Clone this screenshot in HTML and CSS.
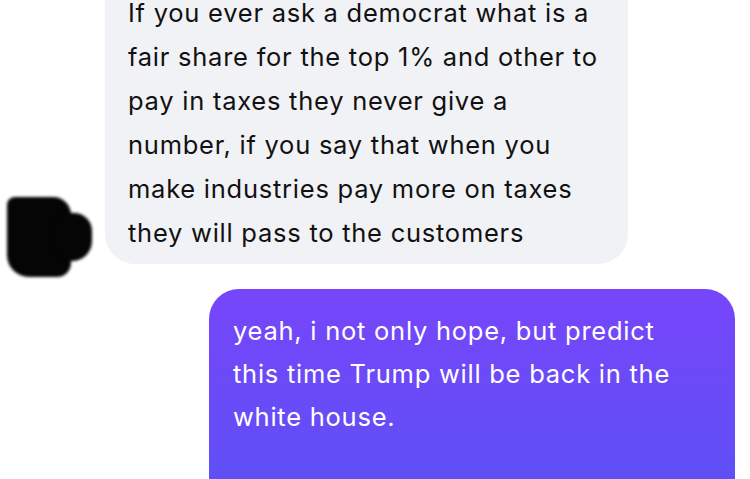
FILE: index.html
```html
<!DOCTYPE html>
<html>
<head>
<meta charset="utf-8">
<link rel="stylesheet" href="styles.css">
</head>
<body>
<div class="chat">
  <div class="row incoming">
    <div class="avatar"><div class="blob-a"></div><div class="blob-b"></div></div>
    <div class="bubble grey">If you ever ask a democrat what is a<br>fair share for the top 1% and other to<br>pay in taxes they never give a<br>number, if you say that when you<br>make industries pay more on taxes<br>they will pass to the customers</div>
  </div>
  <div class="row outgoing">
    <div class="bubble purple">yeah, i not only hope, but predict<br>this time Trump will be back in the<br>white house.</div>
  </div>
</div>
</body>
</html>
```

FILE: styles.css
```css
html, body {
  margin: 0;
  padding: 0;
  background: #ffffff;
  overflow: hidden;
}
body {
  width: 750px;
  height: 479px;
  font-family: Inter, "Noto Sans", sans-serif;
  font-size: 25.5px;
  letter-spacing: 0.75px;
}
.chat {
  display: flex;
  flex-direction: column;
  gap: 25px;
  margin-top: -40px;
}
.row {
  display: flex;
  align-items: flex-end;
}
.incoming {
  padding-left: 5px;
}
.avatar {
  position: relative;
  width: 87px;
  height: 80px;
  margin-bottom: -13px;
  margin-right: 13px;
  flex: none;
}
.blob-a {
  position: absolute;
  left: 2px;
  top: 0;
  width: 64px;
  height: 80px;
  background: #050505;
  border-radius: 8px 18px 14px 22px;
  filter: blur(1.5px);
}
.blob-b {
  position: absolute;
  left: 50px;
  top: 16px;
  width: 37px;
  height: 48px;
  background: #050505;
  border-radius: 14px 18px 20px 16px;
  filter: blur(1.5px);
}
.bubble {
  border-radius: 30px;
  white-space: nowrap;
}
.grey {
  width: 500px;
  line-height: 44px;
  background: #f1f2f6;
  color: #111111;
  padding: 30.75px 0 9.25px 23px;
  border-radius: 0 30px 30px 30px;
}
.outgoing {
  padding-left: 209px;
}
.purple {
  width: 502px;
  height: 200px;
  line-height: 43px;
  padding: 20.25px 0 0 24px;
  color: #ffffff;
  background: linear-gradient(180deg, #7746fa 0%, #5b50f6 100%);
  border-radius: 30px 30px 0 0;
}
```
